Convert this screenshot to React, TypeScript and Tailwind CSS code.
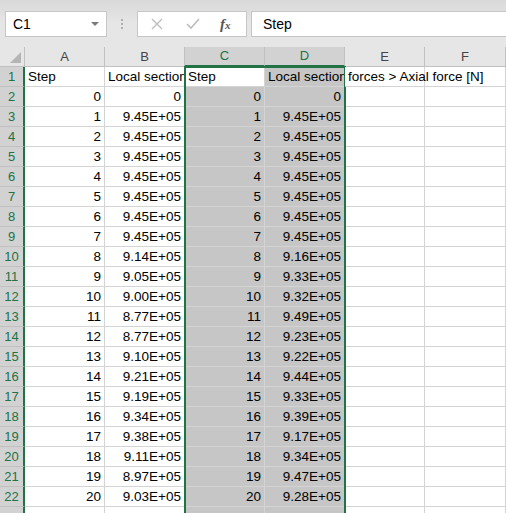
import React from "react";

const GREEN = "#217346";

const colB = [
  "0", "9.45E+05", "9.45E+05", "9.45E+05", "9.45E+05", "9.45E+05", "9.45E+05", "9.45E+05",
  "9.14E+05", "9.05E+05", "9.00E+05", "8.77E+05", "8.77E+05", "9.10E+05", "9.21E+05",
  "9.19E+05", "9.34E+05", "9.38E+05", "9.11E+05", "8.97E+05", "9.03E+05",
];

const colD = [
  "0", "9.45E+05", "9.45E+05", "9.45E+05", "9.45E+05", "9.45E+05", "9.45E+05", "9.45E+05",
  "9.16E+05", "9.33E+05", "9.32E+05", "9.49E+05", "9.23E+05", "9.22E+05", "9.44E+05",
  "9.33E+05", "9.39E+05", "9.17E+05", "9.34E+05", "9.47E+05", "9.28E+05",
];

const columns = ["A", "B", "C", "D", "E", "F"];

function RowHead({ n }: { n?: number }) {
  return (
    <div className="h-[20px] border-b border-[#c0c0c0] bg-[#d2d2d2] border-r-2 border-r-[#217346] flex items-center justify-center text-[13px] text-[#217346]">
      {n}
    </div>
  );
}

function Cell({
  children,
  right,
  selected,
  overflow,
}: {
  children?: React.ReactNode;
  right?: boolean;
  selected?: boolean;
  overflow?: boolean;
}) {
  return (
    <div
      className={`h-[20px] border-b border-r border-[#d4d4d4] px-[3px] leading-[19px] whitespace-nowrap text-[13.5px] text-black ${
        overflow ? "overflow-visible relative z-10" : "overflow-hidden"
      } ${right ? "text-right" : "text-left"} ${selected ? "bg-[#c6c6c6]" : "bg-white"}`}
    >
      {children}
    </div>
  );
}

export default function App() {
  return (
    <div
      className="w-[506px] h-[513px] overflow-hidden bg-[#e6e6e6] text-black"
      style={{ fontFamily: '"Liberation Sans", Arial, sans-serif' }}
    >
      {/* formula bar */}
      <div className="h-[47px] bg-gradient-to-b from-[#d9d9d9] via-[#e6e6e6] to-[#e6e6e6] pt-[11px] pl-[5px] flex items-start">
        <div className="w-[102px] h-[26px] bg-white border border-[#c6c6c6] flex items-center justify-between pl-[7px] pr-[7px]">
          <span className="text-[14px]">C1</span>
          <span className="w-0 h-0 border-l-[4px] border-r-[4px] border-t-[4px] border-l-transparent border-r-transparent border-t-[#7a7a7a]" />
        </div>
        <div className="w-[30px] h-[26px] flex flex-col items-center justify-center gap-[2px]">
          <span className="w-[2px] h-[2px] bg-[#b0b0b0]" />
          <span className="w-[2px] h-[2px] bg-[#b0b0b0]" />
          <span className="w-[2px] h-[2px] bg-[#b0b0b0]" />
        </div>
        <div className="w-[110px] h-[26px] bg-white border border-[#c6c6c6] flex items-center">
          <svg width="12" height="12" viewBox="0 0 12 12" className="ml-[13px]">
            <path d="M1 1 L11 11 M11 1 L1 11" stroke="#bdbdbd" strokeWidth="1.4" />
          </svg>
          <svg width="14" height="12" viewBox="0 0 14 12" className="ml-[23px]">
            <path d="M1 6 L5 10 L13 1" stroke="#bdbdbd" strokeWidth="1.6" fill="none" />
          </svg>
          <span
            className="ml-[20px] text-[15px] italic font-bold text-[#555]"
            style={{ fontFamily: '"Liberation Serif", "Times New Roman", serif' }}
          >
            f<span className="text-[11px]">x</span>
          </span>
        </div>
        <div className="ml-[4px] flex-1 h-[26px] bg-white border border-[#c6c6c6] border-r-0 flex items-center pl-[11px] text-[14px]">
          Step
        </div>
      </div>

      {/* sheet */}
      <div className="relative">
        <div className="grid grid-cols-[25px_80px_80px_80px_80px_80px_81px]">
          {/* column headers */}
          <div className="h-[20px] border-b border-r border-[#c0c0c0] bg-[#e6e6e6] relative">
            <span
              className="absolute right-[3px] bottom-[3px] w-0 h-0"
              style={{ borderBottom: "11px solid #b5b5b5", borderLeft: "11px solid transparent" }}
            />
          </div>
          {columns.map((c) => {
            const sel = c === "C" || c === "D";
            return (
              <div
                key={c}
                className={`h-[20px] border-r border-[#c0c0c0] flex items-center justify-center text-[13px] ${
                  sel
                    ? "bg-[#d2d2d2] text-[#217346] border-b-2 border-b-[#217346]"
                    : "bg-[#e6e6e6] text-[#444] border-b border-b-[#c0c0c0]"
                }`}
              >
                {c}
              </div>
            );
          })}

          {/* row 1 */}
          <RowHead n={1} />
          <Cell>Step</Cell>
          <Cell>Local section forces &gt; Axial force [N]</Cell>
          <Cell>Step</Cell>
          <Cell selected>Local section forces &gt; Axial force [N]</Cell>
          <Cell overflow>forces &gt; Axial force [N]</Cell>
          <Cell />

          {colB.map((b, i) => (
            <React.Fragment key={i}>
              <RowHead n={i + 2} />
              <Cell right>{i}</Cell>
              <Cell right>{b}</Cell>
              <Cell right selected>{i}</Cell>
              <Cell right selected>{colD[i]}</Cell>
              <Cell />
              <Cell />
            </React.Fragment>
          ))}

          {/* partial row 23 */}
          <RowHead />
          <Cell />
          <Cell />
          <Cell selected />
          <Cell selected />
          <Cell />
          <Cell />
        </div>

        {/* selection outline */}
        <div
          className="absolute left-[184px] top-[19px] w-[162px] h-[600px] border-2 pointer-events-none"
          style={{ borderColor: GREEN }}
        />
      </div>
    </div>
  );
}
